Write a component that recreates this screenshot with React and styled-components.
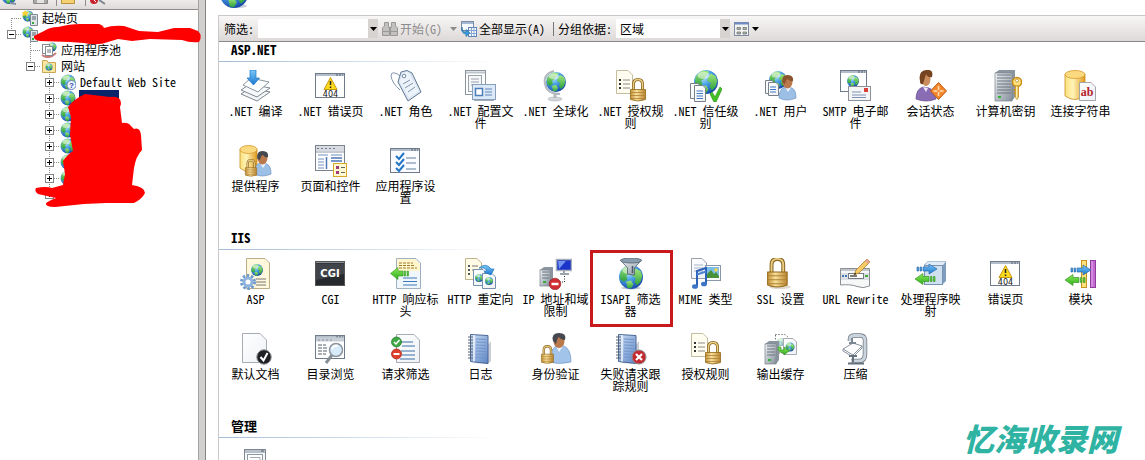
import { useState } from 'react';
import styled, { createGlobalStyle } from 'styled-components';

const treeItems = [
  { label: '起始页', icon: 'home', level: 0, top: true },
  { label: '', icon: 'server', level: 0, toggle: 'minus', last: true },
  { label: '应用程序池', icon: 'pool', level: 1 },
  { label: '网站', icon: 'folder', level: 1, toggle: 'minus', last: true },
  { label: 'Default Web Site', icon: 'unknown', level: 2, toggle: 'plus' },
  { label: '', icon: 'site', level: 2, toggle: 'plus', selected: true },
  { label: '', icon: 'site', level: 2, toggle: 'plus' },
  { label: '', icon: 'site', level: 2, toggle: 'plus' },
  { label: '', icon: 'site', level: 2, toggle: 'plus' },
  { label: '', icon: 'site', level: 2, toggle: 'plus' },
  { label: '', icon: 'site', level: 2, toggle: 'plus' },
  { label: '', icon: 'site', level: 2, toggle: 'plus', last: true },
];

const sections = [
  {
    title: 'ASP.NET',
    items: [
      { label: '.NET 编译', icon: CompileIcon },
      { label: '.NET 错误页', icon: ErrorPageIcon },
      { label: '.NET 角色', icon: RolesIcon },
      { label: '.NET 配置文件', icon: ProfileIcon },
      { label: '.NET 全球化', icon: GlobalizationIcon },
      { label: '.NET 授权规则', icon: AuthRulesIcon },
      { label: '.NET 信任级别', icon: TrustIcon },
      { label: '.NET 用户', icon: UsersIcon },
      { label: 'SMTP 电子邮件', icon: SmtpIcon },
      { label: '会话状态', icon: SessionIcon },
      { label: '计算机密钥', icon: MachineKeyIcon },
      { label: '连接字符串', icon: ConnectionIcon },
      { label: '提供程序', icon: ProvidersIcon },
      { label: '页面和控件', icon: PagesIcon },
      { label: '应用程序设置', icon: AppSettingsIcon },
    ],
  },
  {
    title: 'IIS',
    items: [
      { label: 'ASP', icon: AspIcon },
      { label: 'CGI', icon: CgiIcon },
      { label: 'HTTP 响应标头', icon: HeadersIcon },
      { label: 'HTTP 重定向', icon: RedirectIcon },
      { label: 'IP 地址和域限制', icon: IpIcon },
      { label: 'ISAPI 筛选器', icon: IsapiIcon, marked: true },
      { label: 'MIME 类型', icon: MimeIcon },
      { label: 'SSL 设置', icon: SslIcon },
      { label: 'URL Rewrite', icon: RewriteIcon },
      { label: '处理程序映射', icon: HandlerIcon },
      { label: '错误页', icon: ErrorPageIcon },
      { label: '模块', icon: ModulesIcon },
      { label: '默认文档', icon: DefaultDocIcon },
      { label: '目录浏览', icon: BrowseIcon },
      { label: '请求筛选', icon: RequestFilterIcon },
      { label: '日志', icon: LogIcon },
      { label: '身份验证', icon: AuthIcon },
      { label: '失败请求跟踪规则', icon: FailedIcon },
      { label: '授权规则', icon: AuthRulesIcon },
      { label: '输出缓存', icon: CacheIcon },
      { label: '压缩', icon: CompressIcon },
    ],
  },
  {
    title: '管理',
    items: [{ label: '', name: '功能委派', icon: ManageIcon }],
  },
];

export default function App() {
  const [filter, setFilter] = useState('');
  const [group, setGroup] = useState('区域');

  return (
    <>
      <GlobalStyle />
      <Gradients />
      <Page>
        <Sidebar>
          <TreeToolbar><TreeToolbarIcons /></TreeToolbar>
          <Tree>
            {treeItems.map((item, i) => (
              <TreeRow key={i} $level={item.level}>
                <Branch {...item} />
                <TreeIcon kind={item.icon} />
                <TreeLabel $selected={item.selected}>{item.label}</TreeLabel>
              </TreeRow>
            ))}
          </Tree>
          <Scribble />
        </Sidebar>
        <Splitter />
        <Main>
          <TitleBar>
            <svg width="32" height="32" viewBox="0 0 32 32">
              <ellipse cx="19" cy="30" rx="10" ry="2" fill="#ccd2da" />
              <Globe cx={16} cy={18} r={14} />
            </svg>
          </TitleBar>
          <Panel>
            <Toolbar>
              <label htmlFor="filter">筛选:</label>
              <Combo $width={120}>
                <input id="filter" value={filter} onChange={(e) => setFilter(e.target.value)} />
                <ComboArrow><Caret /></ComboArrow>
              </Combo>
              <ToolButton disabled>
                <BinocularsIcon />
                开始(G)
              </ToolButton>
              <MenuArrow aria-label="开始选项" disabled $spaced><Caret color="#8b8b8b" /></MenuArrow>
              <ToolButton>
                <ShowAllIcon />
                全部显示(A)
              </ToolButton>
              <Separator />
              <label htmlFor="group">分组依据:</label>
              <Combo $width={114}>
                <select id="group" value={group} onChange={(e) => setGroup(e.target.value)}>
                  <option>区域</option>
                  <option>类别</option>
                </select>
                <ComboArrow><Caret /></ComboArrow>
              </Combo>
              <MenuArrow aria-label="视图">
                <ViewIcon />
                <Caret />
              </MenuArrow>
            </Toolbar>
            {sections.map((section) => (
              <section key={section.title}>
                <SectionTitle>{section.title}</SectionTitle>
                <FeatureGrid>
                  {section.items.map(({ label, name, icon: Icon, marked }, i) => (
                    <Feature key={i} aria-label={name || label}>
                      <svg width="33" height="32" viewBox="0 0 33 32"><Icon /></svg>
                      <span>{label}</span>
                      {marked && <Marker />}
                    </Feature>
                  ))}
                </FeatureGrid>
              </section>
            ))}
          </Panel>
        </Main>
        <Watermark>忆海收录网</Watermark>
      </Page>
    </>
  );
}

/* ---------- shared drawing parts ---------- */

function Gradients() {
  return (
    <DefsSvg width="0" height="0" aria-hidden="true">
      <defs>
        <radialGradient id="sea" cx="0.35" cy="0.25" r="0.8">
          <stop offset="0" stopColor="#d2f2fd" />
          <stop offset="0.45" stopColor="#4ba3e6" />
          <stop offset="1" stopColor="#1443a8" />
        </radialGradient>
        <linearGradient id="land" x2="0" y2="1">
          <stop offset="0" stopColor="#a0e67c" />
          <stop offset="1" stopColor="#2ba03c" />
        </linearGradient>
        <linearGradient id="gold">
          <stop offset="0" stopColor="#fbe27c" />
          <stop offset="0.4" stopColor="#fff3b8" />
          <stop offset="1" stopColor="#e09a1c" />
        </linearGradient>
        <linearGradient id="brass">
          <stop offset="0" stopColor="#c4933a" />
          <stop offset="0.4" stopColor="#f8e09a" />
          <stop offset="1" stopColor="#b98530" />
        </linearGradient>
        <linearGradient id="steel" x2="1" y2="1">
          <stop offset="0" stopColor="#f2f4f6" />
          <stop offset="1" stopColor="#85909c" />
        </linearGradient>
        <linearGradient id="paper" x2="1" y2="1">
          <stop offset="0" stopColor="#ffffff" />
          <stop offset="1" stopColor="#eef1f6" />
        </linearGradient>
        <linearGradient id="cover" x2="1" y2="1">
          <stop offset="0" stopColor="#cfe0f6" />
          <stop offset="1" stopColor="#5b84c4" />
        </linearGradient>
        <linearGradient id="blueArrow" x2="0" y2="1">
          <stop offset="0" stopColor="#7cc8f8" />
          <stop offset="1" stopColor="#1878d0" />
        </linearGradient>
        <linearGradient id="greenArrow" x2="0" y2="1">
          <stop offset="0" stopColor="#8ae858" />
          <stop offset="1" stopColor="#2eae1c" />
        </linearGradient>
      </defs>
    </DefsSvg>
  );
}

function Globe({ cx, cy, r }) {
  return (
    <g transform={`translate(${cx} ${cy}) scale(${r / 10})`}>
      <circle r="10" fill="url(#sea)" />
      <path d="M-9-3Q-7-8-2-9.5L2-9Q3-7 0-5.5L-1-3-4-1-3 2-6 4-9 2Z" fill="url(#land)" />
      <path d="M4-7 8-5 9.5-1 8 4 5 7 3 4 4 1 1-1 2-4Z" fill="url(#land)" />
      <path d="M-4 4 0 3 2 6 0 9.5-3 9Z" fill="url(#land)" />
      <ellipse cx="-2" cy="-5.5" rx="5" ry="3" fill="#fff" opacity="0.5" />
    </g>
  );
}

function Sheet({ x, y, w, h, fill = 'url(#paper)', stroke = '#a7abb3', fold = 5, children }) {
  return (
    <g transform={`translate(${x} ${y})`}>
      <path d={`M.5.5H${w - fold}L${w - .5} ${fold}V${h - .5}H.5Z`} fill={fill} stroke={stroke} />
      <path d={`M${w - fold}.5V${fold}H${w - .5}`} fill="#fff" stroke={stroke} />
      {children}
    </g>
  );
}

function Win({ x = 1, y = 3, w = 30, h = 25, fill = '#fff' }) {
  return (
    <g>
      <rect x={x + .5} y={y + .5} width={w - 1} height={h - 1} fill={fill} stroke="#6f7b8b" />
      <path d={`M${x + 1} ${y + 2}h${w - 2}`} stroke="#b4bdca" strokeWidth="2" />
      <path d={`M${x + w - 9} ${y + 2}h7`} stroke="#56606e" strokeWidth="1" strokeDasharray="2 1" />
    </g>
  );
}

function Lock({ x, y, s = 1 }) {
  return (
    <g transform={`translate(${x} ${y}) scale(${s})`}>
      <path d="M3.5 12V6Q3.5 1.5 8 1.5T12.5 6V12" fill="none" stroke="#8b6722" strokeWidth="3" />
      <path d="M3.5 12V6Q3.5 1.5 8 1.5T12.5 6V12" fill="none" stroke="#e9cf84" strokeWidth="1.4" />
      <path d="M.5 11.5H15.5V21.5Q8 24.5.5 21.5Z" fill="url(#brass)" stroke="#936818" strokeWidth=".8" />
      <path d="M1 14.5H15M1 17.5H15M1 20.5H15" stroke="#b08236" strokeWidth=".8" />
    </g>
  );
}

function Person({ x, y, shirt = '#9cbfe6', edge = '#6b93c4', hair = '#5f4530' }) {
  return (
    <g transform={`translate(${x} ${y})`}>
      <path d="M0 23Q0 14 6 12L13 13Q17 15 17 23Q8 27 0 23Z" fill={shirt} stroke={edge} strokeWidth=".7" />
      <path d="M6 12 9 17 12 12.5Z" fill="#eef5ff" />
      <ellipse cx="8.5" cy="7" rx="5" ry="6.5" fill="#b9794c" />
      <path d="M3.500 8Q2 0 8.500 0T14 6Q11 7 9 4Q7 4 6 9Z" fill={hair} />
    </g>
  );
}

function Tower({ x, y, w, h }) {
  const slots = [];
  for (let i = 5; i < h - 6; i += 3) slots.push(`M${x + 2} ${y + i}h${w - 6}`);
  return (
    <g>
      <path d={`M${x} ${y + 3}L${x + 4} ${y}H${x + w}V${y + h - 4}L${x + w - 3} ${y + h}H${x}Z`} fill="#8a959f" />
      <rect x={x} y={y + 3} width={w - 3} height={h - 3} fill="url(#steel)" stroke="#7b838c" strokeWidth=".7" />
      <path d={slots.join('')} stroke="#6b757f" />
      <path d={`M${x + 3} ${y + h - 4}h3`} stroke="#35b038" strokeWidth="2" />
    </g>
  );
}

function Cylinder({ x, y, w, h }) {
  return (
    <g>
      <path d={`M${x} ${y + 4}V${y + h - 4}Q${x + w / 2} ${y + h + 3} ${x + w} ${y + h - 4}V${y + 4}Z`} fill="url(#gold)" stroke="#c98d22" strokeWidth=".8" />
      <ellipse cx={x + w / 2} cy={y + 4.5} rx={w / 2} ry="4" fill="#fbd980" stroke="#d79a30" strokeWidth=".8" />
    </g>
  );
}

function RightArrow({ x, y }) {
  return (
    <g fill="url(#blueArrow)" stroke="#2b6aaa" strokeWidth=".7">
      <path d={`M${x} ${y - 2}h1.500v4h-1.500zM${x + 3} ${y - 2}h1.500v4h-1.500zM${x + 6} ${y - 2}h6v-3l8 5l-8 5v-3h-6z`} />
    </g>
  );
}

function LeftArrow({ x, y }) {
  return (
    <g fill="url(#greenArrow)" stroke="#3b9a28" strokeWidth=".7">
      <path d={`M${x} ${y}l8-5.500v3h6v5h-6v3zM${x + 15.5} ${y - 2.5}h1.500v5h-1.500zM${x + 18.5} ${y - 2.5}h1.500v5h-1.500z`} />
    </g>
  );
}

function Notebook({ x = 4 }) {
  return (
    <g transform={`translate(${x} 0)`}>
      <path d="M5 30 20 31 23 28V8" fill="#c9ced6" />
      <path d="M2.5 1.5 20 2.5V30.5L2.5 28.5Z" fill="url(#cover)" stroke="#4a6796" />
      <path d="M6 2V28.5" stroke="#f0f5fc" strokeWidth="1.5" />
      <path d="M8 6 18 6.5M8 9 18 9.5M8 12 18 12.5M8 15 18 15.5M8 18 18 18.5M8 21 18 21.5M8 24 18 24.5" stroke="#7195cc" />
      <path d="M0 4H5M0 7H5M0 10H5M0 13H5M0 16H5M0 19H5M0 22H5M0 25H5" stroke="#59626e" />
    </g>
  );
}

/* ---------- feature icons ---------- */

function CompileIcon() {
  return (
    <>
      <path d="M2 24 11 18 31 22 18 31Z" fill="#f4f6f8" stroke="#7d8893" />
      <path d="M2 20 11 14 31 18 18 27Z" fill="#f7f9fb" stroke="#7d8893" />
      <path d="M4 15 12 8 30 12 19 22Z" fill="#fff" stroke="#8a949e" />
      <path d="M11 0H17V8H20.5L14.5 15 8 8H11Z" fill="url(#blueArrow)" stroke="#1a73c4" strokeWidth=".7" />
    </>
  );
}

function ErrorPageIcon() {
  return (
    <>
      <Win />
      <path d="M16.5 7.5 23 19.5H10Z" fill="#ffd91c" stroke="#c79a12" strokeLinejoin="round" />
      <path d="M16.5 11V15M16.5 16.5V18" stroke="#222" strokeWidth="1.5" />
      <text x="16.5" y="27" textAnchor="middle" fontFamily="DejaVu Sans, sans-serif" fontSize="8" fill="#111">404</text>
    </>
  );
}

function RolesIcon() {
  return (
    <>
      <path d="M13 7Q2-1 2 6Q3 13 11 20" fill="none" stroke="#8195ab" />
      <path d="M12 2 18 .5 23 3 32 22 19 31 9 12Z" fill="#dce6f2" stroke="#5f7994" />
      <path d="M13 3 19 2 30 21 20 28 11 12Z" fill="#edf3fa" />
      <circle cx="15" cy="6" r="1.8" fill="#fff" stroke="#6f89a4" />
      <path d="M14 14 21 10M16 18 24 13M19 22 26 17" stroke="#7d93ad" />
    </>
  );
}

function ProfileIcon() {
  return (
    <>
      <rect x="1.5" y=".5" width="20" height="24" fill="#fff" stroke="#8b939d" />
      <path d="M2 2.5H21" stroke="#bcc4ce" strokeWidth="2" />
      <rect x="4.5" y="5.5" width="13" height="16" fill="#f6f7f9" stroke="#9aa2ac" />
      <path d="M7 9H15M7 12H15M7 15H15" stroke="#9aa2ac" />
      <rect x="8.5" y="14.5" width="23" height="15" fill="#dce9f7" stroke="#88a0bb" />
      <rect x="11.5" y="18.5" width="7" height="7" fill="#fff" stroke="#4e7fb8" strokeWidth="1.5" />
      <path d="M21 19H28M21 22H28M21 25H28" stroke="#5e86b8" />
      <path d="M10 30.5H30" stroke="#a3abb5" />
    </>
  );
}

function GlobalizationIcon() {
  return (
    <>
      <ellipse cx="16" cy="29" rx="7" ry="2" fill="#d2d5d9" stroke="#b4b8bd" strokeWidth=".6" />
      <path d="M16 24V28" stroke="#b5bac0" strokeWidth="3" />
      <path d="M15 1Q4 4 6 14T21 24" fill="none" stroke="#b3b9c0" strokeWidth="2" />
      <Globe cx={17} cy={12} r={10} />
    </>
  );
}

function AuthRulesIcon() {
  return (
    <>
      <Sheet x={2} y={0} w={17} h={24} fill="#fffdf0" stroke="#c5bd9f">
        <path d="M7 10H14M7 14H14M7 18H14" stroke="#888" />
        <path d="M3 10H5M3 14H5M3 18H5" stroke="#333" strokeWidth="2" />
      </Sheet>
      <Lock x={16} y={8} />
    </>
  );
}

function TrustIcon() {
  return (
    <>
      <Globe cx={17} cy={12} r={12} />
      <Sheet x={1} y={13} w={11} h={16} fold={3} stroke="#777f89" />
      <Sheet x={5} y={15} w={12} h={17} fold={3} stroke="#777f89">
        <path d="M2.5 6H9M2.5 8.5H9M2.5 11H9M2.5 13.5H9" stroke="#3f78c4" />
      </Sheet>
      <path d="M21 24 23 22 26 27 31 17 33 19 27 32H25Z" fill="#43c228" stroke="#2b9416" strokeWidth=".7" />
    </>
  );
}

function UsersIcon() {
  return (
    <>
      <Globe cx={14} cy={10} r={9} />
      <Sheet x={1} y={10} w={10} h={14} fold={3} stroke="#777f89" />
      <Sheet x={4} y={12} w={11} h={14} fold={3} stroke="#777f89">
        <path d="M2 5H8M2 7.5H8M2 10H8" stroke="#3f78c4" />
      </Sheet>
      <Person x={15} y={5} hair="#8b5530" />
    </>
  );
}

function SmtpIcon() {
  return (
    <>
      <Win x={1} y={0} w={27} h={22} />
      <Globe cx={14} cy={11} r={6} />
      <rect x="9.5" y="16.5" width="22" height="14" fill="#f5f5f6" stroke="#8b8f98" />
      <rect x="25" y="18" width="4" height="4" fill="#d8413a" />
      <path d="M13 22H22M13 25H27M13 27.5H27" stroke="#7c93b8" />
    </>
  );
}

function SessionIcon() {
  return (
    <>
      <path d="M2 29Q2 19 9 17L15 18Q21 20 22 29Q12 33 2 29Z" fill="#8a6cb4" stroke="#61468c" strokeWidth=".7" />
      <path d="M9 17 12 22 14 18Z" fill="#efe5f7" />
      <ellipse cx="12" cy="9" rx="4.5" ry="7" fill="#c98c5d" />
      <path d="M6 11Q4 1 12 0T18 7Q14 8 12 4L9 14Q6 15 6 11Z" fill="#75431f" />
      <path d="M24.5 12.5 32.5 21 24.5 29.5 16.5 21Z" fill="#f4862c" stroke="#bd5a10" />
      <path d="M24.5 16V26M19.5 21H29.5" stroke="#ffe0b5" strokeWidth="1.5" strokeDasharray="4 2" />
    </>
  );
}

function MachineKeyIcon() {
  return (
    <>
      <Tower x={6} y={0} w={20} h={31} />
      <circle cx="28" cy="12" r="4.5" fill="#ffe07a" stroke="#c88a14" strokeWidth="1.5" />
      <circle cx="28" cy="10.5" r="1.5" fill="#fff" stroke="#9c6d10" strokeWidth=".6" />
      <path d="M26.5 16H29.5V27L28 29.5 26.5 27.5Z" fill="url(#gold)" stroke="#c88a14" strokeWidth=".8" />
      <path d="M26 20H24.5M26 23H24.5" stroke="#c88a14" strokeWidth="1.5" />
    </>
  );
}

function ConnectionIcon() {
  return (
    <>
      <Cylinder x={1} y={0} w={20} h={30} />
      <Sheet x={15} y={12} w={17} h={19} stroke="#a5a5aa" />
      <text x="23" y="26" textAnchor="middle" fontFamily="Liberation Serif, serif" fontWeight="bold" fontSize="12" fill="#b5202a">ab</text>
    </>
  );
}

function ProvidersIcon() {
  return (
    <>
      <Cylinder x={1} y={0} w={17} h={27} />
      <Person x={15} y={6} hair="#44474e" />
      <Lock x={6} y={14} s={0.75} />
    </>
  );
}

function PagesIcon() {
  return (
    <>
      <rect x="1.5" y=".5" width="29" height="25" fill="#fff" stroke="#7c838c" />
      <path d="M2 3.5H30" stroke="#d8dce2" strokeWidth="5" />
      <path d="M3 3.5H22" stroke="#737b86" strokeDasharray="2 2" />
      <path d="M2 7H30" stroke="#8d96a2" />
      <path d="M4 10H14M17 10H28M4 14H10M4 17H10M4 20H10M4 23H10" stroke="#6d8fc0" />
      <path d="M12.5 12V24M17 13H28M17 16H28" stroke="#4f76b8" strokeWidth="1.5" />
      <rect x="19.5" y="18.5" width="13" height="13" fill="#fff9d2" stroke="#d7a72b" />
      <path d="M22 22.5H25M22 27.5H25" stroke="#a33b7a" strokeWidth="3" />
      <path d="M27 22.5H31M27 27.5H31" stroke="#666" />
    </>
  );
}

function AppSettingsIcon() {
  return (
    <>
      <Win fill="#fafcff" />
      <path d="M17 13H27M17 18H27M17 24H27" stroke="#63809f" />
      <path d="M7 11 10 14 15 8M7 17 10 20 15 14M7 23 10 26 15 20" fill="none" stroke="#2376c8" strokeWidth="2" />
    </>
  );
}

function AspIcon() {
  return (
    <>
      <Sheet x={7} y={0} w={24} h={31} fill="#fff8dc" stroke="#bbae84" />
      <Globe cx={18} cy={12} r={6} />
      <path d="M17 21H27M17 24H27M17 27H27" stroke="#777" />
      <circle cx="9" cy="24" r="6.5" fill="none" stroke="#6e99cc" strokeWidth="3" strokeDasharray="2.4 1.7" />
      <circle cx="9" cy="24" r="4" fill="#fff" stroke="#8eb4de" strokeWidth="3" />
    </>
  );
}

function CgiIcon() {
  return (
    <>
      <rect x="1.5" y="3.5" width="29" height="24" fill="#26292d" stroke="#555" />
      <path d="M2 4.5H30" stroke="#8b8e92" />
      <path d="M2 5.5H30V16L2 22Z" fill="#4d5156" opacity=".7" />
      <text x="16" y="19" textAnchor="middle" fontFamily="DejaVu Sans, sans-serif" fontWeight="bold" fontSize="10" fill="#fff">CGI</text>
    </>
  );
}

function HeadersIcon() {
  return (
    <>
      <Sheet x={7} y={0} w={25} h={31} fill="#eff7fd" stroke="#9fb0c0" />
      <path d="M8 1H26L31 6V13H8Z" fill="#fff6cd" />
      <path d="M10 5H24M10 7.5H26M10 10H28" stroke="#a17c28" strokeDasharray="3 1" />
      <path d="M14 20H28M14 23.5H28M14 27H28" stroke="#3f78b8" />
      <path d="M1.5 15.5 9 9.5V13H14V18H9V21.5ZM15 13H16.5V18H15ZM18 13H19.5V18H18Z" fill="url(#greenArrow)" stroke="#349c1e" strokeWidth=".6" />
    </>
  );
}

function RedirectIcon() {
  return (
    <>
      <Sheet x={1} y={0} w={17} h={22} fill="#fffbe4" stroke="#bdb490">
        <path d="M3 8H5M3 12H5M3 16H5" stroke="#4d5864" strokeWidth="2" />
        <path d="M7 8H13M7 12H10" stroke="#777" />
      </Sheet>
      <Sheet x={9} y={11} w={14} h={17} fold={4} stroke="#7690ad" />
      <Globe cx={15} cy={20} r={4} />
      <Sheet x={18} y={15} w={14} h={16} fold={4} stroke="#7690ad" />
      <Globe cx={25} cy={23} r={4} />
      <path d="M15 10Q22 4 27 11H30L27 17 20 14 23 12Q20 9 15 10Z" fill="url(#blueArrow)" stroke="#2173bd" strokeWidth=".7" />
    </>
  );
}

function IpIcon() {
  return (
    <>
      <Tower x={1} y={9} w={13} h={19} />
      <rect x="17.5" y="1.5" width="15" height="11" fill="#1b35c8" stroke="#a7aeb8" strokeWidth="1.5" />
      <path d="M19 3H27L20 11Z" fill="#7394f0" />
      <path d="M25 13V15M21 16H30" stroke="#9ba3ad" strokeWidth="2" />
      <path d="M25.5 18V24H19" fill="none" stroke="#333" strokeDasharray="1 1.5" />
      <circle cx="16" cy="26" r="5.8" fill="#cf2c31" stroke="#901a1e" strokeWidth=".6" />
      <path d="M12.5 26H19.5" stroke="#fff" strokeWidth="2.5" />
    </>
  );
}

function IsapiIcon() {
  return (
    <>
      <ellipse cx="17" cy="30" rx="10" ry="1.5" fill="#c5cbd2" />
      <Globe cx={17} cy={19} r={12} />
      <path d="M6.500 2 13.500 10V16L20.500 17V10L27.500 2Z" fill="url(#steel)" stroke="#4e5d6c" strokeWidth=".8" />
      <ellipse cx="17" cy="2.5" rx="10.5" ry="2.5" fill="#8b9eaf" stroke="#53626f" strokeWidth=".8" />
      <path d="M18.500 8V15" stroke="#4a5966" strokeWidth="1.5" />
    </>
  );
}

function MimeIcon() {
  return (
    <>
      <Sheet x={2} y={0} w={16} h={21} stroke="#999fa9">
        <path d="M3 7H12M3 10H12M3 13H12" stroke="#a6b4c8" />
      </Sheet>
      <rect x="16.5" y="7.5" width="15" height="15" fill="#fff" stroke="#8a97a8" />
      <rect x="18" y="9" width="12" height="11" fill="#79bde8" />
      <path d="M18 16 22 12 25 16 27 14 30 18V20H18Z" fill="#48913a" />
      <circle cx="27" cy="12" r="1.8" fill="#f7d64a" />
      <path d="M8 28V13L17 10V26" fill="none" stroke="#2e62b8" strokeWidth="2" />
      <path d="M8 16.5 17 13.5" stroke="#4d84d2" strokeWidth="2" />
      <ellipse cx="6" cy="28.5" rx="3" ry="2.3" fill="#3d74c6" />
      <ellipse cx="15" cy="26" rx="3" ry="2.3" fill="#3d74c6" />
    </>
  );
}

function SslIcon() {
  return (
    <>
      <ellipse cx="16" cy="29" rx="11" ry="2" fill="#ded9cc" />
      <Lock x={3} y={-1} s={1.3} />
    </>
  );
}

function RewriteIcon() {
  return (
    <>
      <path d="M1.5 10.5H30.5V28Q24 31 18 28.5T1.5 27Z" fill="#f6f7f7" stroke="#8b8f94" />
      <path d="M2 12H30" stroke="#c1c5cb" strokeWidth="2" />
      <path d="M2 18.5H30" stroke="#dbe0e4" strokeWidth="7" />
      <rect x="9.5" y="15.5" width="15" height="5" fill="#fff" stroke="#737b84" />
      <path d="M3 18H5M6 18H8" stroke="#4678b5" strokeWidth="2" />
      <path d="M26 18H29" stroke="#45a53b" strokeWidth="2" />
      <path d="M11 18H18" stroke="#222" strokeWidth="1.2" />
      <path d="M15 17 17 12 28 1 31 4 20 15Z" fill="#f5cb68" stroke="#ac7c2c" strokeWidth=".8" />
      <path d="M26 3 28 1 31 4 29 6Z" fill="#e7a493" />
      <path d="M15 17 16 14.5 17.5 16Z" fill="#333" />
    </>
  );
}

function HandlerIcon() {
  return (
    <>
      <path d="M10 7 14 3H32V23L28 27Z" fill="#7f9dbf" />
      <rect x="10.5" y="7.5" width="18" height="19" fill="#cfe0f1" stroke="#7893b1" />
      <path d="M11 7 14 3.5H32L29 7Z" fill="#e2ecf6" />
      <RightArrow x={3} y={11} />
      <LeftArrow x={1} y={21} />
    </>
  );
}

function ModulesIcon() {
  return (
    <>
      <rect x="17.5" y="2.5" width="5" height="27" fill="#ffe07a" stroke="#c49420" />
      <rect x="26.5" y="2.5" width="5" height="27" fill="#c46ad2" stroke="#8d3d9b" />
      <path d="M28 3V29" stroke="#e3aaed" />
      <RightArrow x={7} y={12} />
      <LeftArrow x={1} y={22} />
    </>
  );
}

function DefaultDocIcon() {
  return (
    <>
      <Sheet x={3} y={0} w={25} h={30} fold={7} />
      <circle cx="25" cy="24" r="7.2" fill="#1f2124" stroke="#888" />
      <path d="M21.5 24 24.5 27.5 28.5 20" fill="none" stroke="#fff" strokeWidth="2" />
    </>
  );
}

function BrowseIcon() {
  return (
    <>
      <Win y={2} h={24} />
      <path d="M2 6.5H30" stroke="#c8ced6" strokeWidth="4" />
      <path d="M4 7H20" stroke="#88919c" strokeDasharray="2 2" />
      <path d="M4 12H12M4 15H14M4 18H13M4 21H12" stroke="#555e69" strokeDasharray="4 1" />
      <path d="M18 22 12 30" stroke="#868c94" strokeWidth="3" />
      <circle cx="22" cy="17" r="6.5" fill="#d7ebfb" stroke="#8c949e" strokeWidth="1.5" />
      <path d="M18 16Q19 12 24 13" stroke="#fff" strokeWidth="2" fill="none" />
    </>
  );
}

function RequestFilterIcon() {
  return (
    <>
      <Sheet x={7} y={1} w={24} h={29} fold={6}>
        <path d="M5 8H17M6 12H19M5 17H19M6 21H19M4 25H19" stroke="#3a6fa6" />
      </Sheet>
      <circle cx="7.5" cy="9" r="5" fill="#3fa845" stroke="#1f7426" strokeWidth=".7" />
      <path d="M5 9 7 11 10.5 7" fill="none" stroke="#fff" strokeWidth="1.5" />
      <circle cx="7.5" cy="21" r="5" fill="#df3f2b" stroke="#9b2014" strokeWidth=".7" />
      <path d="M4.5 21H10.5" stroke="#fff" strokeWidth="2" />
    </>
  );
}

function LogIcon() {
  return <Notebook x={4} />;
}

function AuthIcon() {
  return (
    <>
      <path d="M10 29Q10 18 17 13H25Q32 16 32 29Q20 32 10 29Z" fill="#a3c4ea" stroke="#6f98c8" strokeWidth=".7" />
      <path d="M17 13 20 19 24 13Z" fill="#f1f6fc" />
      <ellipse cx="20" cy="8" rx="5.5" ry="7" fill="#b9794c" />
      <path d="M14 8Q12 0 20 0T26 7Q22 7 20 4Q18 5 17 11Z" fill="#45484f" />
      <Lock x={2} y={12} s={0.8} />
    </>
  );
}

function FailedIcon() {
  return (
    <>
      <Notebook x={2} />
      <circle cx="25" cy="24" r="7" fill="#c42a31" stroke="#8e8e92" />
      <path d="M22 21 28 27M28 21 22 27" stroke="#fff" strokeWidth="2.2" />
    </>
  );
}

function CacheIcon() {
  return (
    <>
      <path d="M11.5 1.5H21L25 5V20H11.5Z" fill="#fff" stroke="#333" strokeDasharray="1 2" />
      <g opacity=".5"><Globe cx={17} cy={9} r={4} /></g>
      <Tower x={1} y={8} w={14} h={23} />
      <Sheet x={19} y={5} w={14} h={17} fold={4} />
      <Globe cx={26} cy={14} r={4.5} />
      <path d="M14 14H17V17H20V14L25 18 20 22V20Q14 20 14 14Z" fill="url(#greenArrow)" stroke="#37962a" strokeWidth=".7" />
    </>
  );
}

function CompressIcon() {
  return (
    <>
      <path d="M11 8V6Q11 2.500 16 2.500H21Q27 2.500 26 10V21Q26 28 20 28H12" fill="none" stroke="#6d7885" strokeWidth="4.5" />
      <path d="M11 8V6Q11 2.500 16 2.500H21Q27 2.500 26 10V21Q26 28 20 28H12" fill="none" stroke="#cbd3dc" strokeWidth="3" />
      <path d="M4 16 14 10 23 13 14 22Z" fill="#fdfdfe" stroke="#8a939e" />
      <path d="M4 16V18L14 24 23 15V13" fill="none" stroke="#8a939e" />
      <path d="M13 5V10M10 10H17" stroke="#7b8591" strokeWidth="2" />
      <path d="M14 23V29M10 23H18M9 30.5H25" stroke="#67717d" strokeWidth="2" />
    </>
  );
}

function ManageIcon() {
  return (
    <>
      <rect x="5.5" y="3.5" width="21" height="28" fill="#f7f8f9" stroke="#7f8892" />
      <path d="M6 5.5H26" stroke="#b8c0c9" strokeWidth="3" />
      <path d="M22 5H25" stroke="#59626c" />
      <rect x="8.5" y="8.5" width="15" height="20" fill="#fff" stroke="#9099a3" />
      <path d="M11 11.5H21V26" fill="none" stroke="#a2aab3" />
    </>
  );
}

/* ---------- toolbar icons ---------- */

function Caret({ color = '#000' }) {
  return <svg width="7" height="4" viewBox="0 0 7 4"><path d="M0 0H7L3.5 4Z" fill={color} /></svg>;
}

function BinocularsIcon() {
  return (
    <svg width="16" height="16" viewBox="0 0 16 16" fill="#c3c0c0" stroke="#9a9797">
      <path d="M2.5 1.5H6.5V5L7.5 7V14.5H.5V7L2.5 5ZM9.5 1.5H13.5V5L15.5 7V14.5H8.5V7L9.5 5Z" />
      <path d="M6.5 6.5H9.5M1 10.5H7M9 10.5H15" />
    </svg>
  );
}

function ShowAllIcon() {
  return (
    <svg width="16" height="16" viewBox="0 0 16 16">
      <rect x=".5" y=".5" width="12" height="9" fill="#f5f8fc" stroke="#7b8ea8" />
      <path d="M1 2H12" stroke="#a5b8d2" strokeWidth="2" />
      <rect x="7.5" y="6.5" width="8" height="9" fill="#fff" stroke="#5f86bc" />
      <path d="M8 9.5H15M8 12.5H15M10.5 7V15M13 7V15" stroke="#87a7d2" />
      <path d="M1 6Q1 11 5 11V8.5L9 12 5 15.5V13Q0 13 1 6Z" fill="#3a9ad9" stroke="#206da6" strokeWidth=".6" />
    </svg>
  );
}

function ViewIcon() {
  return (
    <svg width="16" height="16" viewBox="0 0 16 16">
      <rect x=".5" y="1.5" width="14" height="13" fill="#f4f3ef" stroke="#7f8ba6" />
      <path d="M1 2.5H14" stroke="#6f8cc4" strokeWidth="2" />
      <path d="M3 6.5H6.5V8.5H3ZM9 6.5H12.5V8.5H9ZM3 11H6.5V13H3ZM9 11H12.5V13H9Z" fill="#a8b8a0" stroke="#73777e" strokeWidth=".8" />
    </svg>
  );
}

function TreeToolbarIcons() {
  return (
    <svg width="120" height="9" viewBox="0 0 120 9">
      <Globe cx={9} cy={-3} r={7} />
      <path d="M10 3 16 4" stroke="#8693a3" strokeWidth="2" />
      <path d="M33.5-4V3.5H47.5V-4" fill="#aaa8a6" stroke="#888" />
      <path d="M37 0H44V3H37Z" fill="#e6e4e2" />
      <path d="M56.5 0V6M85.5 0V6" stroke="#918c8a" />
      <path d="M61.5-4V3.5H74.5V-4" fill="#f4d273" stroke="#b9923d" />
      <circle cx="94" cy="0" r="4" fill="#c8202c" />
      <path d="M92-2 96 2" stroke="#fff" />
      <path d="M99 0 105 4" stroke="#7d8792" strokeWidth="2" />
    </svg>
  );
}

/* ---------- tree ---------- */

// dotted connector and the [+] / [-] box left of a tree node
function Branch({ toggle, last, top }) {
  return (
    <svg width="22" height="16" viewBox="0 0 22 16">
      <path
        d={`M11.5 ${top ? 8 : 0}V${last ? 8 : 16}M12 8.5H22`}
        fill="none" stroke="#8c8c8c" strokeDasharray="1 1"
      />
      {toggle && (
        <>
          <rect x="7.5" y="4.5" width="8" height="8" fill="#fff" stroke="#848484" />
          <path d={toggle === 'plus' ? 'M9 8.5H14M11.5 6V11' : 'M9 8.5H14'} stroke="#000" />
        </>
      )}
    </svg>
  );
}

function TreeIcon({ kind }) {
  return (
    <svg width="16" height="16" viewBox="0 0 16 16">
      {(kind === 'home' || kind === 'server') && (
        <>
          <Globe cx={6} cy={6} r={5.5} />
          <path d="M8.5 4.5H15.5V15.5H8.5Z" fill="#e0e5e8" stroke="#7e8b94" />
          <path d="M10 7H14M10 9H14" stroke="#59636e" />
          <path d="M10 13H12" stroke="#3aa93a" strokeWidth="2" />
        </>
      )}
      {kind === 'home' && <path d="M3 0 4 2 7 2 5 4 6 7 3 5 0 7 1 4 0 2H2Z" fill="#f7cf37" />}
      {kind === 'pool' && (
        <>
          <Globe cx={11} cy={5} r={4.5} />
          <path d="M1 13Q8 18 15 11" fill="none" stroke="#cc7a78" strokeWidth="2" />
          <rect x="1.5" y="2.5" width="7" height="9" fill="#fff" stroke="#858b92" />
          <rect x="4.5" y="4.5" width="7" height="9" fill="#fff" stroke="#858b92" />
          <path d="M6 8H10M6 10H10" stroke="#6b747e" />
        </>
      )}
      {kind === 'folder' && (
        <>
          <path d="M1.5 2.5H6L7 4.5H14.5V14.5H1.5Z" fill="#fbe6a0" stroke="#c8a654" />
          <Globe cx={8} cy={9} r={3.5} />
        </>
      )}
      {(kind === 'site' || kind === 'unknown') && <Globe cx={8} cy={8} r={7.5} />}
      {kind === 'unknown' && (
        <>
          <circle cx="11.5" cy="11" r="4.5" fill="#f0f5ff" stroke="#6783b8" />
          <text x="11.5" y="14" textAnchor="middle" fontFamily="Liberation Sans, sans-serif" fontWeight="bold" fontSize="8" fill="#2446a6">?</text>
        </>
      )}
    </svg>
  );
}

function Scribble() {
  return (
    <ScribbleSvg width="205" height="210" viewBox="0 0 205 210">
      <path
        d="M34 36Q40 33 44 31Q50 27 58 27Q70 24 80 24H99Q103 25 104 28Q112 25 124 26L139 31 158 32 174 28 190 28 198 31Q203 36 199 42Q190 43 182 40L150 39 132 41 118 39 108 42Q98 46 84 43L70 42 40 41Q33 40 34 36Z"
        fill="#f00"
      />
      <path
        d="M68 107Q74 99 85 94L110 97Q121 95 121 104L120 107 122 123Q128 122 131 126L134 129Q140 127 141 135L142 150Q136 156 134 168L132 185Q145 187 145 193Q142 199 134 203L106 203 84 204 55 207Q45 207 46 203Q50 200 56 198L38 194Q34 191 36 188Q46 186 52 188L63 185 65 174 63 161Q68 154 73 151L70 135 71 117Z"
        fill="#f00"
      />
    </ScribbleSvg>
  );
}

/* ---------- styles ---------- */

const GlobalStyle = createGlobalStyle`
  * {
    box-sizing: border-box;
  }

  body {
    margin: 0;
    background: #fff;
    overflow: hidden;
  }

  /* hwid gives Latin letters half the width of a Chinese character */
  body, button, input, select {
    font-family: "Noto Sans CJK SC", sans-serif;
    font-size: 12px;
    font-feature-settings: "hwid";
    color: #000;
  }

  svg {
    display: block;
    flex: none;
  }
`;

const DefsSvg = styled.svg`
  position: absolute;
`;

const Page = styled.div`
  position: relative;
  display: flex;
  height: 100vh;
  overflow: hidden;
`;

const Sidebar = styled.aside`
  position: relative;
  flex: none;
  width: 198px;
`;

const TreeToolbar = styled.div`
  height: 10px;
  background: linear-gradient(#eeebea, #dedada);
  border-bottom: 1px solid #8f8c8b;
`;

const Tree = styled.ul`
  list-style: none;
  margin: 0;
  padding: 0;
`;

const TreeRow = styled.li`
  display: flex;
  align-items: center;
  height: 16px;
  padding-left: ${(p) => p.$level * 19}px;
`;

const TreeLabel = styled.span`
  height: 16px;
  line-height: 16px;
  margin-left: 3px;
  padding: 0 1px;
  min-width: 40px;
  white-space: nowrap;
  background: ${(p) => (p.$selected ? '#0a246a' : 'none')};
`;

const ScribbleSvg = styled.svg`
  position: absolute;
  top: 0;
  left: 0;
  z-index: 1;
  pointer-events: none;
`;

const Splitter = styled.div`
  flex: none;
  width: 8px;
  background: #d2d0cf;
  border-left: 1px solid #a5a3a2;
  border-right: 1px solid #858383;
`;

const Main = styled.main`
  flex: 1;
  min-width: 0;
  padding-left: 12px;
`;

const TitleBar = styled.header`
  display: flex;
  align-items: flex-end;
  height: 15px;
  padding-bottom: 7px;
  overflow: hidden;
`;

const Panel = styled.div`
  border-top: 1px solid #c9c7c7;
  border-left: 1px solid #c9c9cc;
`;

const Toolbar = styled.div`
  display: flex;
  align-items: center;
  gap: 4px;
  height: 26px;
  padding-left: 5px;
  white-space: nowrap;
  background: linear-gradient(#f8f6f6, #ddd9d8);
  border-bottom: 1px solid #8c8989;
`;

const Combo = styled.div`
  display: flex;
  width: ${(p) => p.$width}px;
  height: 19px;
  background: #fff;

  input, select {
    flex: 1;
    min-width: 0;
    padding: 0 4px;
    border: 0;
    outline: 0;
    background: none;
    appearance: none;
  }
`;

const ComboArrow = styled.span`
  display: flex;
  align-items: center;
  justify-content: center;
  width: 10px;
  background: #d6d3d1;
  pointer-events: none;
`;

const ToolButton = styled.button`
  display: flex;
  align-items: center;
  gap: 2px;
  padding: 0;
  border: 0;
  background: none;

  &:disabled {
    color: #8b8b8b;
  }
`;

const MenuArrow = styled(ToolButton)`
  margin-left: ${(p) => (p.$spaced ? 4 : 0)}px;
`;

const Separator = styled.span`
  width: 1px;
  height: 14px;
  margin-left: 4px;
  background: #777;
`;

const SectionTitle = styled.h2`
  height: 20px;
  margin: 0;
  padding-left: 12px;
  font-size: 13px;
  line-height: 16px;
  border-bottom: 1px solid;
  border-image: linear-gradient(to right, #a3bcd6, #fff 280px) 1;
`;

const FeatureGrid = styled.div`
  display: grid;
  grid-template-columns: repeat(auto-fill, 75px);
  grid-auto-rows: 75px;
  margin-left: -1px;
  padding: 8px 0 10px;
`;

const Feature = styled.button`
  position: relative;
  display: flex;
  flex-direction: column;
  align-items: center;
  gap: 3px;
  padding: 0 4px;
  border: 0;
  background: none;
  line-height: 12px;
`;

const Marker = styled.i`
  position: absolute;
  inset: -8px -5px 6px -3px;
  border: 3px solid #c81a1c;
`;

const Watermark = styled.div`
  position: absolute;
  right: 27px;
  bottom: 5px;
  font-size: 31px;
  line-height: 34px;
  font-weight: 900;
  font-style: italic;
  color: #2fb3a3;
`;
